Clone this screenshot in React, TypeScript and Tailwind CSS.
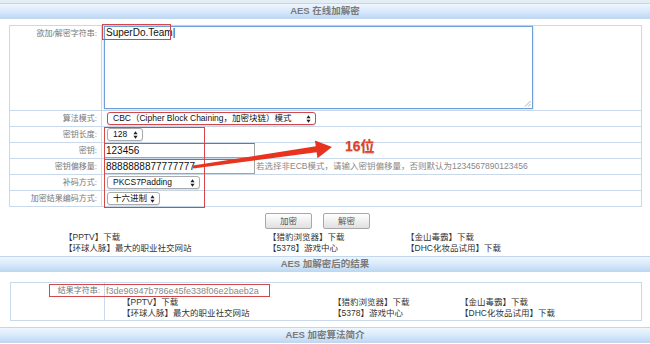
import React from "react";

const SelArrows = () => (
  <svg width="5" height="8" viewBox="0 0 5 8" className="shrink-0">
    <path d="M2.5 0.3L4.6 3.2H0.4Z M2.5 7.7L4.6 4.8H0.4Z" fill="#222" />
  </svg>
);

const Select = ({ text, className = "" }: { text: string; className?: string }) => (
  <div
    className={`flex h-[13px] items-center justify-between rounded-[3px] border bg-white pl-[5px] pr-[4px] text-[8.5px] leading-[11px] text-[#111] shadow-[0_1px_1px_rgba(0,0,0,0.12)] ${className}`}
  >
    <span className="whitespace-nowrap">{text}</span>
    <SelArrows />
  </div>
);

const Input = ({ value }: { value: string }) => (
  <div className="h-[15px] w-[151px] shrink-0 border border-[#a4a4a4] border-t-[#777] border-l-[#888] bg-white pl-[1px] text-[10px] leading-[13px] text-[#111]">
    {value}
  </div>
);

const Row = ({ label, children, tall = false }: { label: string; children: React.ReactNode; tall?: boolean }) => (
  <div className={`grid grid-cols-[92px_1fr] border-b border-[#c9d9ea] ${tall ? "h-[85px]" : "h-[16px]"}`}>
    <div
      className={`border-r border-[#c9d9ea] pr-[4px] text-right text-[8px] leading-[10px] text-[#777] ${
        tall ? "pt-[3px]" : "flex items-center justify-end"
      }`}
    >
      {label}
    </div>
    <div className="flex items-center">{children}</div>
  </div>
);

const Bar = ({ title, className = "" }: { title: string; className?: string }) => (
  <div
    className={`h-[16px] border-y border-[#c3d7ec] bg-linear-to-b from-[#eef6fe] via-[#d9eafb] to-[#bfd9f4] text-center text-[9.5px] font-bold leading-[14px] text-[#7b7b7b] ${className}`}
  >
    {title}
  </div>
);

const links = [
  "【PPTV】下载",
  "【猎豹浏览器】下载",
  "【金山毒霸】下载",
  "【环球人脉】最大的职业社交网站",
  "【5378】游戏中心",
  "【DHC化妆品试用】下载",
];

export default function App() {
  return (
    <div className="relative h-[344px] w-[650px] overflow-hidden bg-white pt-[3px] font-['Liberation_Sans','Noto_Sans_CJK_SC',sans-serif]">
      <div className="absolute inset-x-0 top-0 h-[3px] bg-[#e4ecf4]" />
      <Bar title="AES 在线加解密" />

      {/* 表单 */}
      <div className="ml-[9px] mt-[6px] w-[633px] border-x border-t border-[#c9d9ea] bg-white">
        <Row label="欲加/解密字符串:" tall>
          <div className="relative ml-[2px] h-[83px] w-[429px] self-start border border-[#6f9fd9] shadow-[0_0_2px_#9fc3ee] bg-white">
            <div className="pl-[1px] text-[10px] leading-[12px] text-[#111]">
              SuperDo.Team<span className="font-light">|</span>
            </div>
            <svg className="absolute bottom-[1px] right-[1px]" width="7" height="7" viewBox="0 0 7 7">
              <path d="M6.5 1L1 6.5M6.5 4L4 6.5" stroke="#999" strokeWidth="0.8" />
            </svg>
          </div>
        </Row>
        <Row label="算法模式:">
          <Select text="CBC（Cipher Block Chaining，加密块链）模式" className="ml-[5px] w-[209px] border-[#d0484b]" />
        </Row>
        <Row label="密钥长度:">
          <Select text="128" className="ml-[5px] w-[36px] border-[#aaa]" />
        </Row>
        <Row label="密钥:">
          <div className="ml-[2px]">
            <Input value="123456" />
          </div>
        </Row>
        <Row label="密钥偏移量:">
          <div className="ml-[2px] flex items-center">
            <Input value="8888888877777777" />
            <span className="ml-[1px] whitespace-nowrap text-[8.5px] text-[#888]">
              若选择非ECB模式，请输入密钥偏移量，否则默认为1234567890123456
            </span>
          </div>
        </Row>
        <Row label="补码方式:">
          <Select text="PKCS7Padding" className="ml-[5px] w-[93px] border-[#aaa]" />
        </Row>
        <Row label="加密结果编码方式:">
          <Select text="十六进制" className="ml-[5px] w-[53px] border-[#aaa]" />
        </Row>
      </div>

      {/* 按钮 */}
      <div className="ml-[265px] mt-[6px] flex gap-[11px]">
        {["加密", "解密"].map((t) => (
          <div
            key={t}
            className="flex h-[16px] w-[47px] items-center justify-center rounded-[2px] border border-[#a8a8a8] bg-linear-to-b from-white to-[#e0e0e0] text-[8.5px] text-[#555]"
          >
            {t}
          </div>
        ))}
      </div>

      <div className="ml-[64px] mt-[3px] grid grid-cols-[204px_138px_1fr] text-[8.5px] leading-[11px] text-[#333]">
        {links.map((l) => (
          <div key={l} className="whitespace-nowrap">
            {l}
          </div>
        ))}
      </div>

      <Bar title="AES 加解密后的结果" className="mt-[2px]" />

      {/* 结果 */}
      <div className="ml-[10px] mt-[10px] grid w-[632px] grid-cols-[94px_1fr] border border-[#c9d9ea] bg-white">
        <div className="border-r border-[#c9d9ea] pr-[4px] pt-[2px] text-right text-[8px] leading-[12px] text-[#777]">
          结果字符串:
        </div>
        <div className="pb-[1px] pt-[2px]">
          <div className="pl-[1px] text-[9px] leading-[12px] text-[#888]">f3de96947b786e45fe338f06e2baeb2a</div>
          <div className="grid grid-cols-[211px_127px_1fr] pl-[17px] text-[8.5px] leading-[11px] text-[#333]">
            {links.map((l) => (
              <div key={l} className="whitespace-nowrap">
                {l}
              </div>
            ))}
          </div>
        </div>
      </div>

      <Bar title="AES 加密算法简介" className="mt-[6px]" />

      {/* 标注 */}
      <div className="absolute left-[102px] top-[24px] h-[16px] w-[69px] border border-[#d0484b]" />
      <div className="absolute left-[104px] top-[127px] h-[81px] w-[101px] border border-[#d0484b]" />
      <div className="absolute left-[49px] top-[284px] h-[13px] w-[221px] border border-[#d0484b]" />
      <svg className="absolute left-0 top-0" width="650" height="344" viewBox="0 0 650 344">
        <polygon
          points="192.8,165.5 315.8,146.3 314.9,140.4 332,147 317.5,158.2 316.6,152.3 193.2,168.5"
          fill="#e8331f"
        />
      </svg>
      <div className="absolute left-[345px] top-[138px] text-[14px] font-bold leading-[16px] text-[#e3402a] [text-shadow:0_1px_1px_rgba(0,0,0,0.25)]">
        16位
      </div>
    </div>
  );
}
